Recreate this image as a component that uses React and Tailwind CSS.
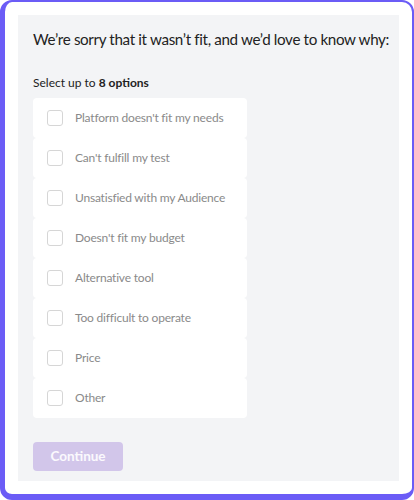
const options = [
  "Platform doesn't fit my needs",
  "Can't fulfill my test",
  'Unsatisfied with my Audience',
  "Doesn't fit my budget",
  'Alternative tool',
  'Too difficult to operate',
  'Price',
  'Other',
];

export default function App() {
  return (
    <div className="w-[414px] h-[500px] bg-white" style={{ fontFamily: 'Lato, "Noto Sans", sans-serif' }}>
      <div className="h-full rounded-[12px] border-[#6b5cf6] border-l-[5px] border-t-2 border-r-2 border-b-[6px] bg-white px-[13px] pt-[13px] pb-[13px]">
        <div className="h-full bg-[#f3f4f6] pl-[15px] pt-[14px]">
          <h1 className="whitespace-nowrap text-[15.2px] leading-[20px] tracking-[-0.35px] text-[#222]">
            We’re sorry that it wasn’t fit, and we’d love to know why:
          </h1>
          <p className="mt-[26px] text-[12px] leading-[16px] text-[#222]">
            Select up to <span className="font-bold">8 options</span>
          </p>
          <div className="mt-[7px] w-[214px]">
            {options.map((o, i) => (
              <label key={i} className="flex h-[40px] items-center rounded-[4px] bg-white pl-[14px]">
                <span className="h-[16px] w-[16px] rounded-[3px] border border-[#d6d6d6] bg-white" />
                <span className="ml-[12px] text-[12px] tracking-[-0.2px] text-[#8a8a8a]">{o}</span>
              </label>
            ))}
          </div>
          <button className="mt-[24px] h-[29px] w-[90px] rounded-[4px] bg-[#d2c6ea] text-[13.5px] font-bold text-white/90">
            Continue
          </button>
        </div>
      </div>
    </div>
  );
}
